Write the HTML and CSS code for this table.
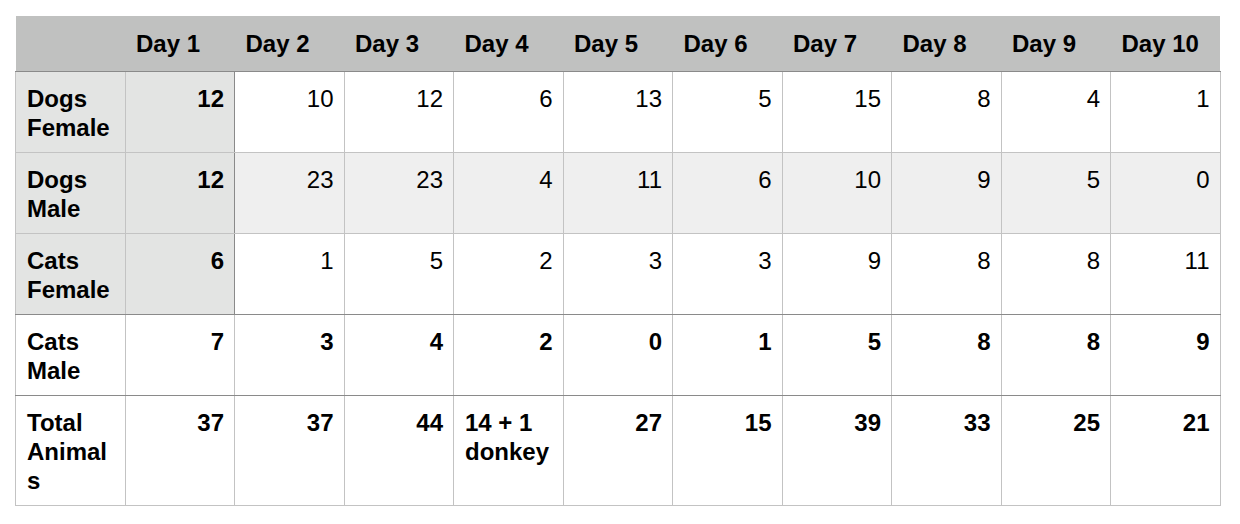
FILE: index.html
```html
<!DOCTYPE html>
<html>
<head>
<meta charset="utf-8">
<link rel="stylesheet" href="styles.css">
</head>
<body>
<table class="grid">
  <colgroup>
    <col><col><col><col><col><col><col><col><col><col><col>
  </colgroup>
  <thead>
    <tr>
      <th></th><th>Day 1</th><th>Day 2</th><th>Day 3</th><th>Day 4</th><th>Day 5</th><th>Day 6</th><th>Day 7</th><th>Day 8</th><th>Day 9</th><th>Day 10</th>
    </tr>
  </thead>
  <tbody>
    <tr class="shade-row">
      <td class="label hc">Dogs Female</td><td class="num hc strong edge">12</td><td class="num">10</td><td class="num">12</td><td class="num">6</td><td class="num">13</td><td class="num">5</td><td class="num">15</td><td class="num">8</td><td class="num">4</td><td class="num">1</td>
    </tr>
    <tr class="alt">
      <td class="label hc">Dogs Male</td><td class="num hc strong edge">12</td><td class="num">23</td><td class="num">23</td><td class="num">4</td><td class="num">11</td><td class="num">6</td><td class="num">10</td><td class="num">9</td><td class="num">5</td><td class="num">0</td>
    </tr>
    <tr class="sep">
      <td class="label hc">Cats Female</td><td class="num hc strong edge">6</td><td class="num">1</td><td class="num">5</td><td class="num">2</td><td class="num">3</td><td class="num">3</td><td class="num">9</td><td class="num">8</td><td class="num">8</td><td class="num">11</td>
    </tr>
    <tr class="bold sep">
      <td class="label">Cats Male</td><td class="num">7</td><td class="num">3</td><td class="num">4</td><td class="num">2</td><td class="num">0</td><td class="num">1</td><td class="num">5</td><td class="num">8</td><td class="num">8</td><td class="num">9</td>
    </tr>
    <tr class="bold total">
      <td class="label">Total Animals</td><td class="num">37</td><td class="num">37</td><td class="num">44</td><td class="text">14 + 1 donkey</td><td class="num">27</td><td class="num">15</td><td class="num">39</td><td class="num">33</td><td class="num">25</td><td class="num">21</td>
    </tr>
  </tbody>
</table>
</body>
</html>
```
FILE: styles.css
```css
html, body {
  margin: 0;
  padding: 0;
  background: #ffffff;
}

body {
  padding: 16px 0 0 15px;
  font-family: "Liberation Sans", Arial, Helvetica, sans-serif;
  color: #000;
}

.grid {
  border-collapse: collapse;
  table-layout: fixed;
  width: 1205px;
  font-size: 24px;
  line-height: 29px;
}

.grid col {
  width: 109.5px;
}

.grid th {
  background: #c0c1c0;
  height: 55px;
  padding: 0 8px 0 11px;
  text-align: left;
  font-weight: bold;
  vertical-align: middle;
  border: none;
  border-bottom: 1px solid #8a8a8a;
  box-sizing: border-box;
  white-space: nowrap;
}

.grid td {
  border: 1px solid #c3c3c3;
  padding: 12px 10px 10px 11px;
  vertical-align: top;
  overflow-wrap: anywhere;
  height: 58px;
}

.grid td.num {
  text-align: right;
}

.grid td.text {
  text-align: left;
}

.grid td.label,
.grid td.strong,
.grid tr.bold td {
  font-weight: bold;
}

.grid tr.alt td {
  background: #efefef;
}

.grid td.hc,
.grid tr.alt td.hc {
  background: #e3e4e3;
}

.grid td.edge {
  border-right: 1px solid #8a8a8a;
}

.grid tr.sep td {
  border-bottom: 1px solid #8a8a8a;
}

.grid tr.total td {
  height: 87px;
}
```
